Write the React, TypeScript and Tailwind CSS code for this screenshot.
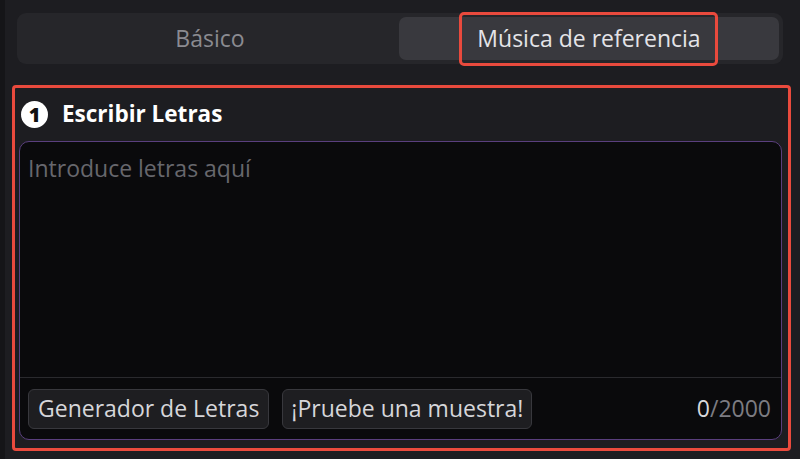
import React from "react";

export default function App() {
  return (
    <div
      className="relative flex h-[459px] w-[800px] overflow-hidden bg-[#1d1d21]"
      style={{ fontFamily: '"Open Sans", "Noto Sans", sans-serif' }}
    >
      <div className="h-full w-[5px] bg-[#151518]" />
      <div className="flex flex-1 flex-col">
        {/* Tabs */}
        <div className="ml-[12px] mt-[13px] flex h-[51px] w-[766px] rounded-[9px] bg-[#26262a] p-[4px]">
          <div className="flex flex-1 items-center justify-center text-[23px] leading-none text-[#8b8b91]">
            Básico
          </div>
          <div className="flex w-[380px] items-center justify-center rounded-[7px] bg-[#39393e] text-[23px] leading-none text-[#e4e4e8]">
            Música de referencia
          </div>
        </div>

        {/* Lyrics panel */}
        <div className="ml-[7px] mt-[21px] flex h-[366px] w-[779px] flex-col rounded-[4px] border-[3px] border-[#e94a3d]">
          <div className="flex h-[53px] items-center gap-[14px] pl-[6px]">
            <div className="flex h-[27px] w-[27px] items-center justify-center rounded-full bg-white text-[20px] font-extrabold leading-none text-[#111]">
              1
            </div>
            <div className="text-[22.5px] font-bold leading-none text-white">Escribir Letras</div>
          </div>
          <div className="ml-[4px] flex h-[299px] w-[763px] flex-col rounded-[10px] border-[1.5px] border-[#5a3f7e] bg-[#0a0a0c]">
            <div className="flex-1 px-[8px] pt-[11px] text-[23px] leading-[30px] text-[#67676d]">
              Introduce letras aquí
            </div>
            <div className="h-px bg-[#2a2a2e]" />
            <div className="flex h-[61px] items-center gap-[13px] pl-[8px] pr-[10px]">
              <div className="flex h-[40px] items-center rounded-[6px] border border-[#38383d] bg-[#1e1e21] px-[9px] text-[23px] leading-none text-[#d6d6da]">
                Generador de Letras
              </div>
              <div className="flex h-[40px] items-center rounded-[6px] border border-[#38383d] bg-[#1e1e21] px-[8px] text-[23px] leading-none text-[#d6d6da]">
                ¡Pruebe una muestra!
              </div>
              <div className="ml-auto text-[23px] leading-none text-[#7c7c82]">
                <span className="text-[#d8d8dc]">0</span>/2000
              </div>
            </div>
          </div>
        </div>
      </div>

      {/* Annotation highlight */}
      <div className="absolute left-[459px] top-[12px] h-[54px] w-[259px] rounded-[5px] border-[3px] border-[#e94a3d]" />
    </div>
  );
}
